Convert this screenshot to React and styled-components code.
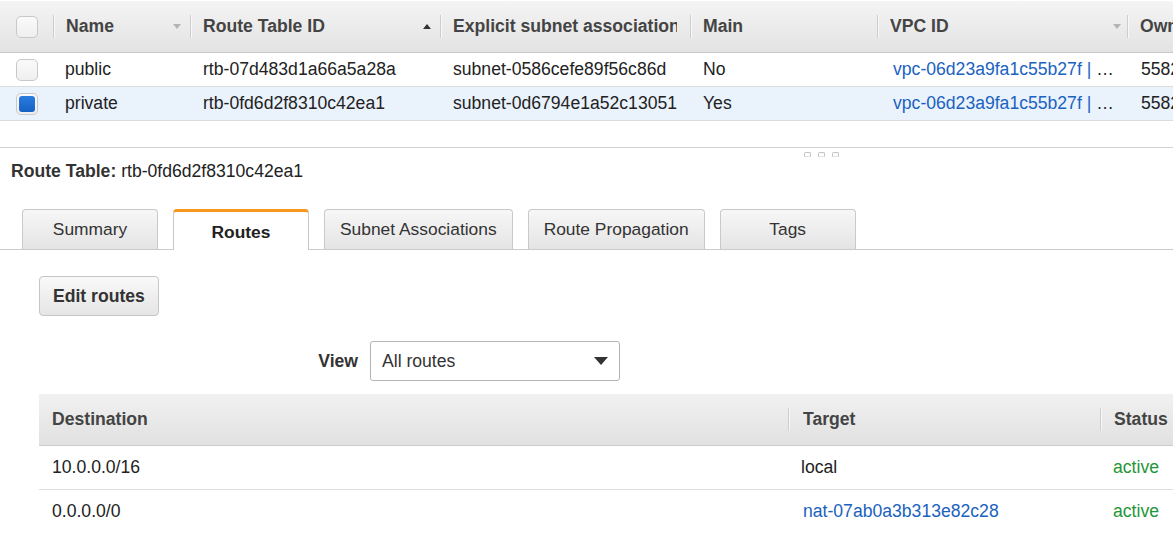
import React from 'react'
import styled, { createGlobalStyle, css } from 'styled-components'

const Global = createGlobalStyle`
  html, body { margin: 0; padding: 0; background: #fff; }
  body {
    font-family: "Liberation Sans", Arial, sans-serif;
    font-size: 17.6px;
    color: #222;
    overflow: hidden;
  }
`

const Page = styled.div`
  width: 1173px;
  height: 537px;
  overflow: hidden;
  padding-top: 1px;
  box-sizing: border-box;
`

// ---- top list of route tables
const listCols = '53px 137px 250px 250px 187px 250px 220px'

const ListHead = styled.div`
  display: grid;
  grid-template-columns: ${listCols};
  height: 52px;
  box-sizing: border-box;
  background: linear-gradient(#f4f4f4, #e3e3e3);
  border-bottom: 1px solid #c9c9c9;
`

const ListRow = styled.div`
  display: grid;
  grid-template-columns: ${listCols};
  height: 34px;
  box-sizing: border-box;
  border-bottom: 1px solid #dcdcdc;
  background: ${p => (p.$selected ? '#eaf2fc' : '#fff')};
`

const HeadCell = styled.div`
  display: flex;
  align-items: center;
  min-width: 0;
  font-weight: bold;
  color: #444;
  white-space: nowrap;
`

const Sep = styled.span`
  flex: none;
  width: 1px;
  height: 23px;
  background: #cdcdcd;
  box-shadow: 1px 0 0 #f8f8f8;
`

const HeadLabel = styled.span`
  flex: 1;
  min-width: 0;
  overflow: hidden;
  padding-left: ${p => p.$pad || 12}px;
  margin-right: 13px;
`

const Caret = styled.span`
  flex: none;
  width: 0;
  height: 0;
  margin-right: ${p => p.$gap || 9}px;
  border-left: 4.5px solid transparent;
  border-right: 4.5px solid transparent;
  ${p =>
    p.$dir === 'up'
      ? css`border-bottom: 5px solid #333;`
      : css`border-top: 5px solid #b4b4b4;`}
`

const Cell = styled.div`
  display: flex;
  align-items: center;
  min-width: 0;
  padding-left: ${p => p.$pad ?? 12}px;
  white-space: nowrap;
  overflow: hidden;
`

const Check = styled.span`
  display: flex;
  align-items: center;
  justify-content: center;
  width: 22px;
  height: 22px;
  box-sizing: border-box;
  border: 1px solid #c8c8c8;
  border-radius: 5px;
  background: linear-gradient(#fafafa, #efefef);
  &::after {
    content: '';
    display: ${p => (p.$checked ? 'block' : 'none')};
    width: 16px;
    height: 16px;
    border-radius: 3px;
    background: linear-gradient(#2a7de0, #1661c4);
  }
`

const Link = styled.span`
  color: #1a62c0;
`

// ---- split bar
const Split = styled.div`
  margin-top: 26px;
  border-top: 1px solid #d2d2d2;
  height: 9px;
  display: flex;
  gap: 7px;
  padding: 4px 0 0 804px;
  box-sizing: content-box;
`

const Grip = styled.span`
  width: 5px;
  height: 3px;
  border: 1px solid #c4c4c4;
  border-bottom-color: #e4e4e4;
  border-radius: 2px 2px 0 0;
`

// ---- details pane
const Title = styled.div`
  line-height: 20px;
  padding-left: 11px;
  color: #222;
  & b { color: #333; }
`

const TabBar = styled.div`
  margin-top: 28px;
  display: flex;
  align-items: flex-end;
  gap: 15px;
  padding-left: 22px;
  border-bottom: 1px solid #cbcbcb;
`

const Tab = styled.div`
  min-width: 136px;
  height: 40px;
  padding: 0 15px;
  box-sizing: border-box;
  display: flex;
  align-items: center;
  justify-content: center;
  border: 1px solid #c9c9c9;
  border-bottom: none;
  border-radius: 4px 4px 0 0;
  background: linear-gradient(#f7f7f7, #e4e4e4);
  color: #333;
  font-size: 17.4px;
  ${p =>
    p.$active &&
    css`
      height: 41px;
      margin-bottom: -1px;
      padding-top: 3px;
      background: #fff;
      border-top: 3px solid #f7981d;
      font-weight: bold;
      color: #222;
    `}
`

const TabBody = styled.div`
  padding: 26px 0 0 39px;
`

const Button = styled.div`
  display: inline-flex;
  align-items: center;
  height: 40px;
  padding: 0 13px;
  box-sizing: border-box;
  border: 1px solid #c6c6c6;
  border-radius: 4px;
  background: linear-gradient(#f9f9f9, #e5e5e5);
  font-weight: bold;
  color: #333;
`

const FilterBar = styled.div`
  width: 581px;
  margin-top: 25px;
  display: flex;
  justify-content: flex-end;
  align-items: center;
  gap: 12px;
`

const FilterLabel = styled.span`
  font-weight: bold;
  color: #333;
`

const Select = styled.div`
  width: 250px;
  height: 40px;
  box-sizing: border-box;
  border: 1px solid #b4b4b4;
  border-radius: 3px;
  display: flex;
  align-items: center;
  justify-content: space-between;
  padding: 0 11px 0 11px;
  color: #333;
  background: #fff;
`

const SelectCaret = styled.span`
  width: 0;
  height: 0;
  border-left: 7px solid transparent;
  border-right: 7px solid transparent;
  border-top: 8px solid #333;
`

// ---- routes table
const routeCols = '749px 312px 200px'

const RouteHead = styled.div`
  margin-top: 13px;
  display: grid;
  grid-template-columns: ${routeCols};
  height: 52px;
  box-sizing: border-box;
  background: linear-gradient(#f1f1f1, #e1e1e1);
  border-bottom: 1px solid #cbcbcb;
`

const RouteRow = styled.div`
  display: grid;
  grid-template-columns: ${routeCols};
  height: 44px;
  box-sizing: border-box;
  border-bottom: 1px solid #dedede;
  &:last-child { border-bottom-color: transparent; }
`

const Status = styled.span`
  color: #1f9638;
`

const listHead = [
  { label: 'Name', caret: 'down' },
  { label: 'Route Table ID', caret: 'up' },
  { label: 'Explicit subnet association' },
  { label: 'Main' },
  { label: 'VPC ID', caret: 'down', gap: 6 },
  { label: 'Owner' },
]

const tables = [
  { name: 'public', id: 'rtb-07d483d1a66a5a28a', subnet: 'subnet-0586cefe89f56c86d', main: 'No' },
  { name: 'private', id: 'rtb-0fd6d2f8310c42ea1', subnet: 'subnet-0d6794e1a52c13051', main: 'Yes', selected: true },
]

const tabs = ['Summary', 'Routes', 'Subnet Associations', 'Route Propagation', 'Tags']

const routes = [
  { dest: '10.0.0.0/16', target: 'local' },
  { dest: '0.0.0.0/0', target: 'nat-07ab0a3b313e82c28', link: true },
]

export default function App() {
  return (
    <Page>
      <Global />
      <ListHead>
        <HeadCell style={{ paddingLeft: 16 }}>
          <Check />
        </HeadCell>
        {listHead.map(h => (
          <HeadCell key={h.label}>
            <Sep />
            <HeadLabel>{h.label}</HeadLabel>
            {h.caret && <Caret $dir={h.caret} $gap={h.gap} />}
          </HeadCell>
        ))}
      </ListHead>
      {tables.map(t => (
        <ListRow key={t.id} $selected={t.selected}>
          <Cell $pad={16}>
            <Check $checked={t.selected} />
          </Cell>
          <Cell>{t.name}</Cell>
          <Cell $pad={13}>{t.id}</Cell>
          <Cell $pad={13}>{t.subnet}</Cell>
          <Cell $pad={13}>{t.main}</Cell>
          <Cell $pad={16}>
            <Link>vpc-06d23a9fa1c55b27f |</Link>&nbsp;…
          </Cell>
          <Cell $pad={14}>558224107139</Cell>
        </ListRow>
      ))}

      <Split>
        <Grip />
        <Grip />
        <Grip />
      </Split>

      <Title>
        <b>Route Table:</b> rtb-0fd6d2f8310c42ea1
      </Title>

      <TabBar>
        {tabs.map(t => (
          <Tab key={t} $active={t === 'Routes'}>
            {t}
          </Tab>
        ))}
      </TabBar>

      <TabBody>
        <Button>Edit routes</Button>
        <FilterBar>
          <FilterLabel>View</FilterLabel>
          <Select>
            All routes
            <SelectCaret />
          </Select>
        </FilterBar>

        <RouteHead>
          <HeadCell>
            <HeadLabel $pad={13}>Destination</HeadLabel>
          </HeadCell>
          <HeadCell>
            <Sep />
            <HeadLabel $pad={14}>Target</HeadLabel>
          </HeadCell>
          <HeadCell>
            <Sep />
            <HeadLabel $pad={13}>Status</HeadLabel>
          </HeadCell>
        </RouteHead>
        {routes.map(r => (
          <RouteRow key={r.dest}>
            <Cell $pad={13}>{r.dest}</Cell>
            <Cell $pad={r.link ? 15 : 13}>{r.link ? <Link>{r.target}</Link> : r.target}</Cell>
            <Cell $pad={13}>
              <Status>active</Status>
            </Cell>
          </RouteRow>
        ))}
      </TabBody>
    </Page>
  )
}
